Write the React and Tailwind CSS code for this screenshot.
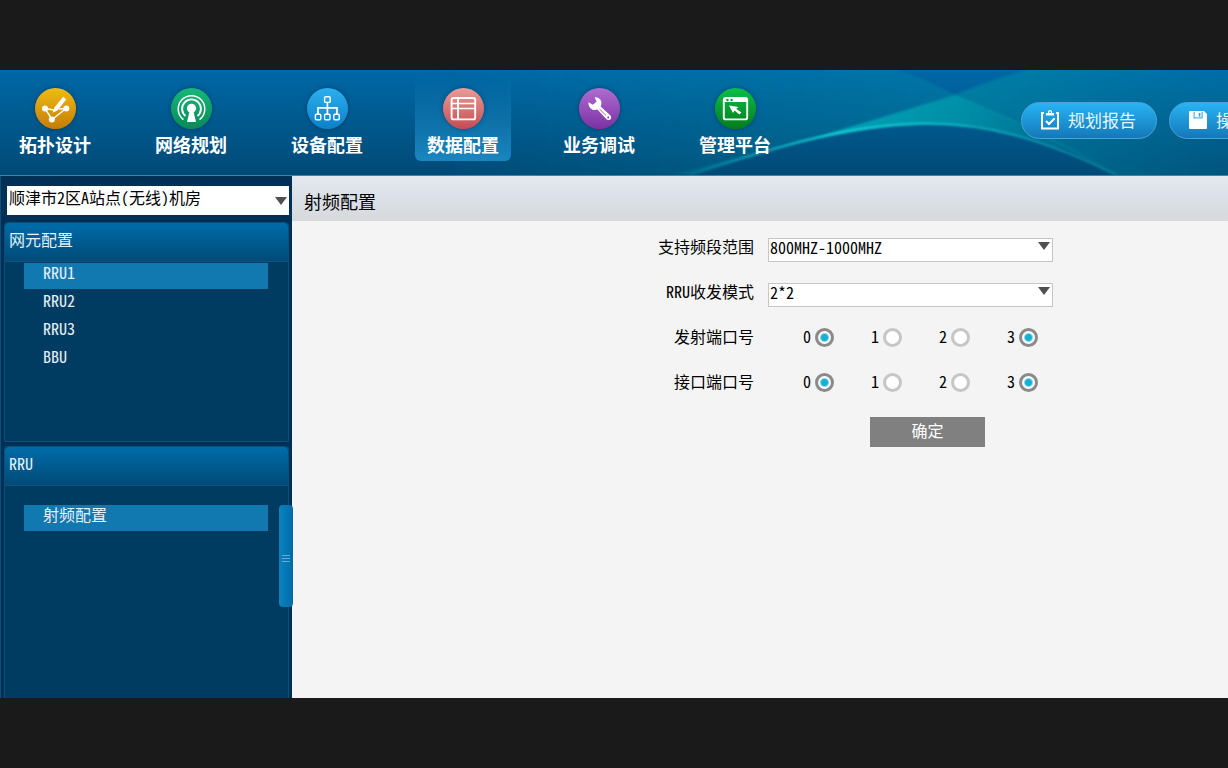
import React from "react";

const TopologyIcon = () => (
  <svg viewBox="0 0 41 41" className="size-[41px]" fill="#fff" stroke="#fff">
    <path d="M10 20.5 L17 31.5 L31 20.5 M10 20.5 L19 22 M24 21 L31 20.5" fill="none" strokeWidth="1.4" />
    <circle cx="10" cy="20.5" r="3" stroke="none" />
    <circle cx="31.3" cy="20.5" r="3" stroke="none" />
    <circle cx="16.8" cy="31.5" r="3" stroke="none" />
    <path d="M17.6 24.8 L19.4 19.6 L28.2 8.8 L31.2 11.4 L22.4 22.4 Z" stroke="none" />
  </svg>
);

const SignalIcon = () => (
  <svg viewBox="0 0 41 41" className="size-[41px]" fill="none" stroke="#fff" strokeWidth="1.5">
    <path d="M12.5 31.6 A13.3 13.3 0 1 1 28.5 31.6" />
    <path d="M14.5 28 A9.4 9.4 0 1 1 26.5 28" strokeWidth="1.9" />
    <circle cx="20.5" cy="20.3" r="4.6" fill="#fff" stroke="none" />
    <path d="M18.6 23 H22.4 L25 34 H16 Z" fill="#fff" stroke="none" />
  </svg>
);

const DevicesIcon = () => (
  <svg viewBox="0 0 41 41" className="size-[41px]" fill="none" stroke="#fff" strokeWidth="1.4">
    <rect x="17.6" y="8.8" width="5.6" height="5.6" rx="1" />
    <path d="M20.4 14.4 V26 M11 26 V19.8 H30 V26" strokeWidth="1.7" />
    <rect x="8.4" y="26.2" width="5.4" height="5.6" rx="1" />
    <rect x="17.6" y="26.2" width="5.4" height="5.6" rx="1" />
    <rect x="26.8" y="26.2" width="5.4" height="5.6" rx="1" />
  </svg>
);

const TableIcon = () => (
  <svg viewBox="0 0 41 41" className="size-[41px]" fill="none" stroke="#fff" strokeWidth="1.9">
    <rect x="8.6" y="10" width="23.6" height="21.4" rx="2" />
    <path d="M15 10 V31.4" />
    <path d="M8.6 15.6 H32.2 M8.6 20.4 H32.2" strokeWidth="1.5" />
  </svg>
);

const WrenchIcon = () => (
  <svg viewBox="0 0 41 41" className="size-[41px]">
    <path
      d="M9.4 14.2 L14 16.8 L17.6 13.6 L15.6 9.2 C19.6 8.6 23 11.8 22.4 16 C22.3 17 22 17.8 21.6 18.6 L31.2 27.2 C32.8 28.8 32.4 30.6 31.2 31.4 C30 32.4 28.4 32.2 27.2 31 L18.4 21.6 C13.6 23.4 9.2 19.8 9.4 14.2 Z"
      fill="#fff"
    />
    <circle cx="29.2" cy="29.4" r="1" fill="#8e44b4" />
    <path d="M20.6 21.2 L27 27.4" stroke="#8e44b4" strokeWidth="0.8" />
  </svg>
);

const ConsoleIcon = () => (
  <svg viewBox="0 0 41 41" className="size-[41px]">
    <rect x="8.8" y="10" width="23.4" height="21.4" rx="2" fill="none" stroke="#fff" strokeWidth="1.9" />
    <path d="M8.8 10 H32.2 V14 H8.8 Z" fill="#fff" />
    <circle cx="12.4" cy="12" r="1.2" fill="#0a9a34" />
    <circle cx="16.6" cy="12" r="1.2" fill="#0a9a34" />
    <path d="M14 17.4 L23.4 19 L21.2 20.8 L26.4 24.4 L24.4 26.6 L19.6 22.6 L18 25 Z" fill="#fff" />
  </svg>
);

const ReportIcon = () => (
  <svg viewBox="0 0 20 20" className="size-5 shrink-0" fill="none" stroke="#fff" strokeWidth="2">
    <path d="M4 3 H2 V18.4 H18 V3 H16" />
    <path d="M6 5.4 V3 H8 V1.6 Q8 0 10 0 Q12 0 12 1.6 V3 H14 V5.4 Z" fill="#fff" stroke="none" />
    <circle cx="10" cy="2.2" r="0.9" fill="#28a8e8" stroke="none" />
    <path d="M6 11 L9 14 L14.6 8.4" />
  </svg>
);

const SaveIcon = () => (
  <svg viewBox="0 0 20 20" className="size-5 shrink-0">
    <path d="M2 1 H16 L19 4 V18 Q19 19 18 19 H2 Q1 19 1 18 V2 Q1 1 2 1 Z" fill="#fff" />
    <path d="M5.6 2 H14.6 V8.4 H5.6 Z" fill="#2aa0dc" />
    <path d="M6.6 2 H13.6 V7.4 H6.6 Z" fill="#fff" />
    <path d="M10.8 3 H12.4 V6.6 H10.8 Z" fill="#2aa0dc" />
  </svg>
);

const navItems = [
  { label: "拓扑设计", icon: TopologyIcon, disc: "bg-linear-to-b from-[#eebc14] to-[#c57c06]" },
  { label: "网络规划", icon: SignalIcon, disc: "bg-linear-to-b from-[#16b878] to-[#068a58]" },
  { label: "设备配置", icon: DevicesIcon, disc: "bg-linear-to-b from-[#2cb0ee] to-[#0c7fc8]" },
  { label: "数据配置", icon: TableIcon, disc: "bg-linear-to-b from-[#e89c98] to-[#c44c54]", active: true },
  { label: "业务调试", icon: WrenchIcon, disc: "bg-linear-to-b from-[#b06cd0] to-[#7c30a4]" },
  { label: "管理平台", icon: ConsoleIcon, disc: "bg-linear-to-b from-[#08c048] to-[#067c1c]" },
];

const Waves = () => (
  <svg
    viewBox="0 0 1228 106"
    preserveAspectRatio="none"
    className="pointer-events-none absolute inset-0 size-full"
    aria-hidden="true"
  >
    <defs>
      <linearGradient id="beam" x1="680" y1="0" x2="1120" y2="0" gradientUnits="userSpaceOnUse">
        <stop offset="0" stopColor="#00a8b0" stopOpacity="0.1" />
        <stop offset="0.35" stopColor="#08bcc4" stopOpacity="0.75" />
        <stop offset="0.65" stopColor="#00a8b0" stopOpacity="0.65" />
        <stop offset="1" stopColor="#00a8b0" stopOpacity="0" />
      </linearGradient>
      <linearGradient id="edge" x1="690" y1="0" x2="1120" y2="0" gradientUnits="userSpaceOnUse">
        <stop offset="0" stopColor="#10c8cc" stopOpacity="0.15" />
        <stop offset="0.35" stopColor="#18d0d8" stopOpacity="1" />
        <stop offset="0.65" stopColor="#10c0c8" stopOpacity="0.8" />
        <stop offset="1" stopColor="#10a8b8" stopOpacity="0.4" />
      </linearGradient>
      <linearGradient id="veilLeft" x1="440" y1="0" x2="955" y2="0" gradientUnits="userSpaceOnUse">
        <stop offset="0" stopColor="#0090a8" stopOpacity="0" />
        <stop offset="1" stopColor="#0090a8" stopOpacity="0.35" />
      </linearGradient>
      <linearGradient id="veilRight" x1="955" y1="0" x2="1228" y2="0" gradientUnits="userSpaceOnUse">
        <stop offset="0" stopColor="#0098a8" stopOpacity="0.5" />
        <stop offset="1" stopColor="#0090a8" stopOpacity="0.15" />
      </linearGradient>
      <filter id="soft" x="-5%" y="-20%" width="110%" height="140%">
        <feGaussianBlur stdDeviation="1" />
      </filter>
    </defs>
    <g filter="url(#soft)">
      <path d="M440 -4 H885 Q925 8 955 25 Q830 66 690 106 H440 Z" fill="url(#veilLeft)" />
      <path d="M955 25 Q990 10 1040 -4 H1232 V110 H1120 Q1040 62 955 25 Z" fill="url(#veilRight)" />
      <path d="M670 106 C780 80 870 52 955 25 C1010 48 1070 76 1120 106 C990 40 900 36 690 106 Z" fill="url(#beam)" />
      <path d="M690 106 C880 42 970 32 1116 106" fill="none" stroke="url(#edge)" strokeWidth="2.4" />
    </g>
  </svg>
);

const Arrow = ({ className }) => (
  <svg viewBox="0 0 12 8" className={"pointer-events-none absolute h-2 w-3 " + className} fill="#505050" aria-hidden="true">
    <path d="M0 0 H12 L6 8 Z" />
  </svg>
);

function FormSelect({ id, label, value }) {
  return (
    <div className="grid h-[45px] grid-cols-2 items-center">
      <label htmlFor={id} className="pr-1.5 pb-1 text-right">{label}</label>
      <div className="pt-1 pl-2">
        <div className="relative w-[285px]">
          <select
            id={id}
            className="block h-6 w-full appearance-none border border-[#c6c6c6] bg-white pr-6 pb-1.5 pl-px leading-4 outline-none"
          >
            <option>{value}</option>
          </select>
          <Arrow className="top-1 right-[3px]" />
        </div>
      </div>
    </div>
  );
}

function PortRow({ name, label }) {
  return (
    <div className="grid h-[45px] grid-cols-2 items-center" role="group" aria-label={label}>
      <span className="pr-1.5 pb-1 text-right">{label}</span>
      <div className="flex pl-[43px]">
        {[0, 1, 2, 3].map((port) => (
          <label key={port} className="flex w-[68px] shrink-0 items-center gap-1">
            <span className="pb-1">{port}</span>
            <input
              type="checkbox"
              name={name}
              defaultChecked={port === 0 || port === 3}
              className="size-[19px] appearance-none rounded-full border-[3px] border-[#c6c6c6] bg-white checked:border-[#8a8a8a] checked:bg-[radial-gradient(circle,#14b1d5_0_3px,#ffffff_5px)]"
            />
          </label>
        ))}
      </div>
    </div>
  );
}

function Panel({ title, className, children }) {
  return (
    <section className={"flex flex-col rounded-t border border-[#0b4f78] bg-[#003c62] " + className}>
      <h2 className="h-[39px] shrink-0 rounded-t border-b border-[#0b5580] bg-linear-to-b from-[#006ca8] to-[#004a78] px-1 leading-8">
        {title}
      </h2>
      {children}
    </section>
  );
}

function ListItem({ active, children }) {
  return (
    <li>
      <button
        type="button"
        className={"block h-[26px] w-full pb-2 pl-[19px] text-left leading-[18px] " + (active ? "bg-[#1278b0]" : "")}
      >
        {children}
      </button>
    </li>
  );
}

export default function App() {
  return (
    <div className="flex min-h-screen flex-col overflow-x-hidden bg-[#1a1a1a] py-[70px] font-['Noto_Sans_Mono_CJK_SC','Noto_Sans_CJK_SC',sans-serif] text-base text-black">
      <header className="relative flex h-[106px] items-start overflow-hidden border-b border-[#3d86b4] bg-linear-to-b from-[#0068a6] to-[#004a76]">
        <Waves />
        <nav className="relative flex shrink-0 gap-10 pt-2 pl-[7px]">
          {navItems.map(({ label, icon: Icon, disc, active }) => (
            <a
              key={label}
              href="#"
              className={
                "flex h-[83px] w-24 flex-col items-center rounded-md pt-[10px] text-lg leading-6 font-bold text-white " +
                (active ? "bg-linear-to-b from-transparent to-[#1a86c0]" : "")
              }
            >
              <span className={"rounded-full shadow-[0_0_4px_rgba(0,30,60,0.5)] " + disc}>
                <Icon />
              </span>
              <span className="mt-[3px]">{label}</span>
            </a>
          ))}
        </nav>
        <div className="relative ml-[238px] flex shrink-0 gap-3 pt-8">
          <button
            type="button"
            className="flex h-[37px] w-[136px] items-center gap-2 rounded-full border border-[#4aa4d8] bg-linear-to-b from-[#28b4f4] to-[#1478b8] pb-0.5 pl-[18px] text-[17px] text-[#e4f6ff]"
          >
            <ReportIcon />
            规划报告
          </button>
          <button
            type="button"
            className="flex h-[37px] w-[136px] items-center gap-2 rounded-full border border-[#4aa4d8] bg-linear-to-b from-[#28b4f4] to-[#1478b8] pb-0.5 pl-[18px] text-[17px] text-[#e4f6ff]"
          >
            <SaveIcon />
            操
          </button>
        </div>
      </header>

      <div className="flex flex-1">
        <aside className="relative flex w-[292px] shrink-0 flex-col border-l border-[#0b4f78] bg-[#003055] px-[3px] pt-[10px] text-[#e4f0f8]">
          <div className="relative ml-[3px]">
            <select
              aria-label="机房"
              className="block h-[29px] w-full appearance-none rounded-none bg-white pr-5 pb-2 pl-0.5 leading-[18px] text-black outline-none"
            >
              <option>顺津市2区A站点(无线)机房</option>
            </select>
            <Arrow className="top-[11px] right-0.5" />
          </div>
          <Panel title="网元配置" className="mt-[7px] h-[220px]">
            <ul className="mt-px mr-5 ml-[19px] flex flex-col gap-0.5">
              <ListItem active>RRU1</ListItem>
              <ListItem>RRU2</ListItem>
              <ListItem>RRU3</ListItem>
              <ListItem>BBU</ListItem>
            </ul>
          </Panel>
          <Panel title="RRU" className="mt-1 flex-1 border-b-0">
            <ul className="mt-[19px] mr-5 ml-[19px]">
              <ListItem active>射频配置</ListItem>
            </ul>
          </Panel>
          <button
            type="button"
            aria-label="收起侧栏"
            className="absolute top-[329px] -right-px flex h-[102px] w-3.5 flex-col items-center justify-center gap-0.5 rounded bg-linear-to-r from-[#0a84c0] to-[#006aa8] pt-1"
          >
            <span className="h-px w-2 bg-[#5cb0dc]" />
            <span className="h-px w-2 bg-[#5cb0dc]" />
            <span className="h-px w-2 bg-[#5cb0dc]" />
          </button>
        </aside>

        <main className="min-w-0 flex-1 bg-[#f4f4f4]">
          <h1 className="h-[45px] bg-linear-to-b from-[#e4e9ef] via-[#dbe0e8] to-[#d6dadc] pt-[11px] pl-3 text-lg leading-7">
            射频配置
          </h1>
          <form className="pt-1" onSubmit={(e) => e.preventDefault()}>
            <FormSelect id="band" label="支持频段范围" value="800MHZ-1000MHZ" />
            <FormSelect id="mode" label="RRU收发模式" value="2*2" />
            <PortRow name="tx" label="发射端口号" />
            <PortRow name="rx" label="接口端口号" />
            <div className="grid grid-cols-2 pt-3">
              <div className="col-start-2 pl-[110px]">
                <button type="submit" className="h-[30px] w-[115px] bg-[#808080] pb-1 text-white">
                  确定
                </button>
              </div>
            </div>
          </form>
        </main>
      </div>
    </div>
  );
}
